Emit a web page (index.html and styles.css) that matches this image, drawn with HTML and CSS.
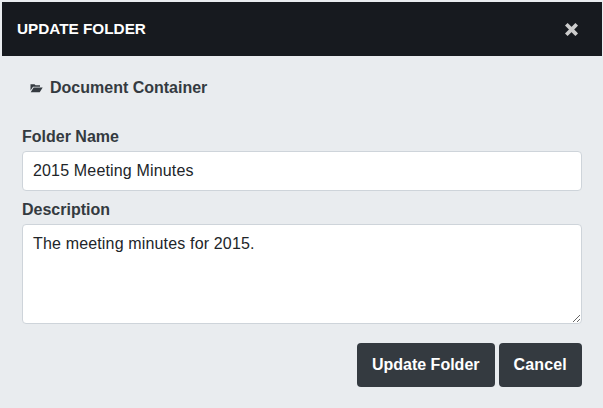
FILE: index.html
```html
<!DOCTYPE html>
<html lang="en">
<head>
<meta charset="utf-8">
<title>Update Folder</title>
<link rel="stylesheet" href="styles.css">
</head>
<body>
<div class="modal">
  <header class="modal-header">
    <h1 class="modal-title">UPDATE FOLDER</h1>
    <button class="close" type="button" aria-label="Close">
      <svg viewBox="0 0 13 13" width="13" height="13" aria-hidden="true"><path d="M2.6 2.6 10.4 10.4M10.4 2.6 2.6 10.4"/></svg>
    </button>
  </header>
  <form class="modal-body">
    <div class="crumb">
      <svg class="folder" viewBox="0 0 13 10" width="13" height="10" aria-hidden="true"><path d="M0.5 1.2H4.5L5.5 2.3H10V3.7H3L0.5 7.5Z"/><path d="M3.6 4.4H12.7L9.7 9.2H0.7Z"/></svg>
      <span>Document Container</span>
    </div>
    <label class="label" for="name">Folder Name</label>
    <input class="control" id="name" type="text" value="2015 Meeting Minutes">
    <label class="label label-desc" for="desc">Description</label>
    <textarea class="control area" id="desc">The meeting minutes for 2015.</textarea>
    <div class="actions">
      <button class="btn" type="button">Update Folder</button>
      <button class="btn btn-cancel" type="button">Cancel</button>
    </div>
  </form>
</div>
</body>
</html>
```
FILE: styles.css
```css
* { box-sizing: border-box; }
html, body { margin: 0; height: 100%; }
body {
  background: #e9ecef;
  font-family: "Liberation Sans", Arial, sans-serif;
  color: #343a40;
  overflow: hidden;
}
.modal { padding: 2px 1px 0 2px; }
.modal-header {
  height: 54px;
  background: #171a1f;
  display: flex;
  align-items: center;
  justify-content: space-between;
  padding: 0 24px 0 15px;
}
.modal-title {
  margin: 0;
  font-size: 15.3px;
  font-weight: 700;
  color: #fff;
}
.close {
  border: 0;
  background: none;
  padding: 0;
  display: flex;
}
.close path {
  fill: none;
  stroke: #ccc;
  stroke-width: 3.7;
  stroke-linecap: square;
}
.modal-body {
  padding: 0 20px;
  display: flex;
  flex-direction: column;
}
.crumb {
  display: flex;
  align-items: center;
  gap: 7px;
  margin: 20px 0 0 8px;
  height: 24px;
  font-size: 16px;
  font-weight: 700;
}
.folder { fill: #343a40; }
.label {
  margin-top: 27px;
  height: 20px;
  line-height: 20px;
  font-size: 16px;
  font-weight: 700;
}
.label-desc { margin-top: 9px; }
.control {
  display: block;
  width: 560px;
  margin-top: 4px;
  border: 1px solid #ced4da;
  border-radius: 4px;
  background: #fff;
  color: #212529;
  font-family: inherit;
  font-size: 16px;
  letter-spacing: 0.16px;
  padding: 0 10px;
  height: 40px;
  outline: 0;
}
.area {
  height: 100px;
  padding: 7px 10px;
  line-height: 24px;
  resize: vertical;
}
.actions {
  display: flex;
  justify-content: flex-end;
  gap: 4px;
  margin-top: 19px;
  width: 560px;
}
.btn {
  height: 44px;
  padding: 0 15px;
  border: 0;
  border-radius: 4px;
  background: #343a40;
  color: #fff;
  font-family: inherit;
  font-size: 16px;
  font-weight: 700;
}
.btn-cancel { letter-spacing: 0.17px; }
```
